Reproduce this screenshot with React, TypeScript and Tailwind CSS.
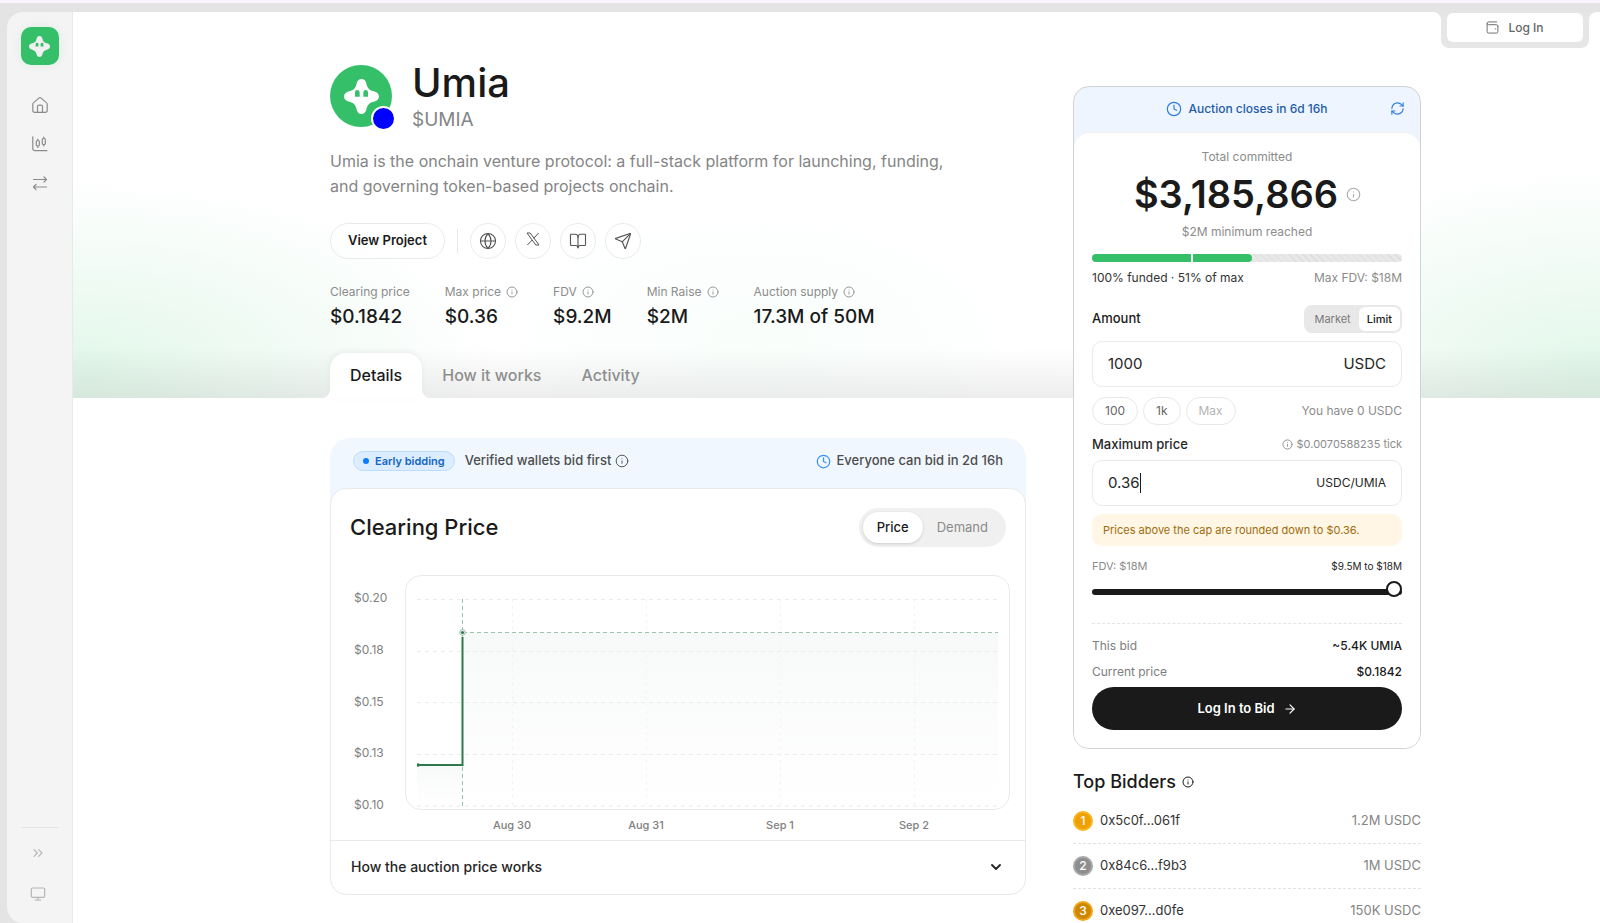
import React, { useState } from "react";
import {
  ArrowRight,
  BookOpen,
  ChevronDown,
  ChevronsRight,
  Clock,
  Globe,
  Info,
  Monitor,
  RefreshCw,
  Send,
} from "lucide-react";

function StarMark({ className, fill }: { className: string; fill: string }) {
  return (
    <svg viewBox="0 0 36 36" className={className} aria-hidden="true">
      <path
        fill={fill}
        d="M18 0c2.700 0 4.400 1.800 5 4.600.8 4.200 2.800 6.900 7.500 8C34 13.400 36 15.400 36 18s-2 4.600-5.500 5.400c-4.700 1.100-6.700 3.800-7.500 8-.6 2.800-2.300 4.600-5 4.600s-4.400-1.800-5-4.600c-.8-4.200-2.800-6.900-7.500-8C2 22.600 0 20.600 0 18s2-4.600 5.500-5.400c4.700-1.100 6.700-3.800 7.500-8C13.600 1.800 15.300 0 18 0z"
      />
      <path fill="#35bf69" d="M11.300 18.200v-4.400a2.400 2.400 0 0 1 4.800 0v4.400zM19.900 18.200v-4.400a2.400 2.400 0 0 1 4.800 0v4.400z" />
    </svg>
  );
}

function IconHome() {
  return (
    <svg viewBox="0 0 16 16" className="size-4" fill="none" stroke="currentColor" strokeWidth="1.200" strokeLinecap="round" strokeLinejoin="round" aria-hidden="true">
      <path d="M.8 7.200c0-.7.300-1.200.8-1.600l5.300-4.500a1.700 1.700 0 0 1 2.200 0l5.300 4.500c.5.4.8.9.8 1.600v6.300a1.800 1.800 0 0 1-1.800 1.800H2.600A1.800 1.800 0 0 1 .8 13.500z" />
      <path d="M5.500 15.300V9.600c0-.9.600-1.500 1.500-1.500h2c.9 0 1.500.6 1.500 1.500v5.700" />
    </svg>
  );
}

function IconCandles() {
  return (
    <svg viewBox="0 0 16 16" className="size-4" fill="none" stroke="currentColor" strokeWidth="1.200" strokeLinecap="round" strokeLinejoin="round" aria-hidden="true">
      <path d="M.8.8v11.900a2 2 0 0 0 2 2h12M5.800 3v1.500M5.800 10v1.500M11.800 1v1.500M11.800 8.500V10" />
      <rect x="4.300" y="4.500" width="3" height="5.500" rx="1" />
      <rect x="10.300" y="2.500" width="3" height="6" rx="1" />
    </svg>
  );
}

function IconSwap() {
  return (
    <svg viewBox="0 0 16 16" className="size-4" fill="none" stroke="currentColor" strokeWidth="1.200" strokeLinecap="round" strokeLinejoin="round" aria-hidden="true">
      <path d="M1.500 4.500h13M12 2l2.500 2.500L12 7M14.500 12h-13M4 9.500 1.500 12 4 14.500" />
    </svg>
  );
}

function IconX() {
  return (
    <svg viewBox="0 0 14 14" className="size-3.5" fill="none" stroke="currentColor" strokeWidth="1" aria-hidden="true">
      <path d="M1 1h3.200l8.800 12H9.800zM12.600 1 7.900 6.200M6.200 8 1.400 13" />
    </svg>
  );
}

function IconWallet() {
  return (
    <svg viewBox="0 0 14 14" className="size-[13px]" fill="none" stroke="currentColor" strokeLinecap="round" strokeLinejoin="round" aria-hidden="true">
      <path d="M12.800 5.500v6a1.500 1.500 0 0 1-1.500 1.500H2.700a1.500 1.500 0 0 1-1.500-1.500V2.800A1.800 1.800 0 0 1 3 1h8.500M1.200 2.800c0 .7.600 1.200 1.500 1.200h8.600a1.500 1.500 0 0 1 1.500 1.500M10 8.500h.4" />
    </svg>
  );
}

const STATS = [
  { label: "Clearing price", value: "$0.1842", info: false },
  { label: "Max price", value: "$0.36", info: true },
  { label: "FDV", value: "$9.2M", info: true },
  { label: "Min Raise", value: "$2M", info: true },
  { label: "Auction supply", value: "17.3M of 50M", info: true },
];

const BIDDERS = [
  { rank: 1, address: "0x5c0f...061f", amount: "1.2M USDC", badge: "bg-[#eea004] border-[#f6b81e]" },
  { rank: 2, address: "0x84c6...f9b3", amount: "1M USDC", badge: "bg-[#8e8e8e] border-[#a8a8a8]" },
  { rank: 3, address: "0xe097...d0fe", amount: "150K USDC", badge: "bg-[#d08700] border-[#eda51c]" },
];

function Sidebar() {
  return (
    <aside className="flex w-[66px] shrink-0 flex-col items-center rounded-l-2xl border-r border-[#e9e9e9] bg-[#f4f4f4] pt-[15px] pb-[21px]">
      <a href="#" aria-label="Umia home" className="flex size-[38px] items-center justify-center rounded-[10px] bg-[#35bf69] shadow-[0_0_10px_rgba(53,191,105,0.12)]">
        <StarMark className="size-[21px]" fill="#f0f0f0" />
      </a>
      <nav className="mt-8 flex flex-col gap-[23px] text-[#8c8c8c]">
        <a href="#" aria-label="Home"><IconHome /></a>
        <a href="#" aria-label="Markets"><IconCandles /></a>
        <a href="#" aria-label="Swap"><IconSwap /></a>
      </nav>
      <div className="mt-auto flex w-[38px] flex-col items-center gap-[25px] border-t border-[#e6e6e6] pt-[17px] pr-1 text-[#b5b5b5]">
        <button aria-label="Expand sidebar"><ChevronsRight className="size-4" strokeWidth={1.800} /></button>
        <button aria-label="Display"><Monitor className="size-4" strokeWidth={1.800} /></button>
      </div>
    </aside>
  );
}

function Hero() {
  const social = "flex size-9 items-center justify-center rounded-full border border-[#e9ebea] bg-white/40 text-[#555]";
  return (
    <section>
      <div className="flex gap-5">
        <div className="relative flex size-[62px] items-center justify-center rounded-full bg-[#35bf69]">
          <StarMark className="size-[35px]" fill="#fff" />
          <span className="absolute -right-1 -bottom-1 size-[25px] rounded-full border-2 border-white bg-[#0000ff]" />
        </div>
        <div className="-mt-[7px]">
          <h1 className="text-[40px] leading-[50px] font-medium text-[#1a1a1a]">Umia</h1>
          <p className="text-[19px] leading-6 text-[#858585]">$UMIA</p>
        </div>
      </div>
      <p className="mt-[17px] max-w-[660px] text-base leading-[25px] text-[#858585]">
        Umia is the onchain venture protocol: a full-stack platform for launching, funding,
        <br />
        and governing token-based projects onchain.
      </p>
      <div className="mt-6 flex items-center gap-[9px]">
        <button className="h-9 rounded-full border border-[#e9ebea] bg-white/40 px-[17px] text-[13px] font-semibold text-[#1a1a1a]">View Project</button>
        <span className="mx-[3px] h-6 w-px bg-[#e6e8e7]" />
        <a href="#" aria-label="Website" className={social}><Globe className="size-[18px]" strokeWidth={1.500} /></a>
        <a href="#" aria-label="X" className={`${social} pb-1`}><IconX /></a>
        <a href="#" aria-label="Docs" className={social}><BookOpen className="size-[18px]" strokeWidth={1.500} /></a>
        <a href="#" aria-label="Telegram" className={social}><Send className="size-[18px]" strokeWidth={1.500} /></a>
      </div>
      <dl className="mt-6 flex gap-[35px]">
        {STATS.map((s) => (
          <div key={s.label}>
            <dt className="flex items-center gap-[5px] text-xs leading-[18px] text-[#8c8c8c]">
              {s.label}
              {s.info && <Info className="size-3" strokeWidth={1.800} />}
            </dt>
            <dd className="mt-[2px] text-[19px] leading-7 font-medium text-[#1a1a1a]">{s.value}</dd>
          </div>
        ))}
      </dl>
      <div role="tablist" className="mt-[22px] flex h-[46px] text-base font-medium text-[#8f8f8f]">
        <button role="tab" aria-selected="true" className="relative rounded-t-2xl bg-white px-5 pb-[3px] text-[#1a1a1a] shadow-[0_-2px_6px_rgba(0,0,0,0.05)]">
          Details
          <svg viewBox="0 0 10 10" className="absolute bottom-0 -left-[10px] size-[10px]" aria-hidden="true"><path d="M10 0v10H0A10 10 0 0 0 10 0z" fill="#fff" /></svg>
          <svg viewBox="0 0 10 10" className="absolute -right-[10px] bottom-0 size-[10px]" aria-hidden="true"><path d="M0 0v10h10A10 10 0 0 1 0 0z" fill="#fff" /></svg>
        </button>
        <button role="tab" aria-selected="false" className="px-5 pb-[3px]">How it works</button>
        <button role="tab" aria-selected="false" className="px-5 pb-[3px]">Activity</button>
      </div>
    </section>
  );
}

const Y_TICKS = ["$0.20", "$0.18", "$0.15", "$0.13", "$0.10"];
const X_TICKS = [
  { label: "Aug 30", x: 95 },
  { label: "Aug 31", x: 229 },
  { label: "Sep 1", x: 363 },
  { label: "Sep 2", x: 497 },
];

function PriceChart() {
  return (
    <div className="mt-7 mr-[15px] ml-[19px] flex">
      <div className="flex h-[240px] w-[55px] shrink-0 flex-col justify-between pt-[13px] pl-1 text-xs leading-5 text-[#808080]">
        {Y_TICKS.map((t) => (
          <span key={t}>{t}</span>
        ))}
      </div>
      <div className="min-w-0 grow">
        <div className="rounded-2xl border border-[#eaeaea] px-[11px] pt-[23px] pb-[2px]">
          <svg viewBox="0 0 581 208" preserveAspectRatio="none" className="block h-[208px] w-full" fill="none" role="img" aria-label="Clearing price over time">
            <defs>
              <linearGradient id="area" x1="0" y1="0" x2="0" y2="1">
                <stop offset="0" stopColor="#1f5a3c" stopOpacity="0.035" />
                <stop offset="1" stopColor="#1f5a3c" stopOpacity="0" />
              </linearGradient>
            </defs>
            <path d="M46 33h535v174H46z" fill="url(#area)" />
            <path d="M0 166h46v41H0z" fill="url(#area)" />
            <path d="M0 .5h581M0 52.500h581M0 103.500h581M0 155.500h581M0 207h581" stroke="#ebebeb" strokeDasharray="4 4" />
            <path d="M95.500 0v208M229.500 0v208M363.500 0v208M497.500 0v208" stroke="#f3f3f3" strokeDasharray="3 4" />
            <path d="M45.500 0v208M46 33.500h535" stroke="#9cc4ad" strokeDasharray="4 3" />
            <path d="M0 166h45.500V38" stroke="#2c7a4b" strokeWidth="2" />
            <circle cx="45.500" cy="33.500" r="2.800" fill="#fff" stroke="#8fb9a1" />
            <circle cx="45.500" cy="33.500" r="1.600" fill="#2c7a4b" />
            <circle cx="1" cy="166" r="1.800" fill="#2c7a4b" />
          </svg>
        </div>
        <div className="relative h-[30px] text-[11px] leading-[30px] font-medium text-[#808080]">
          {X_TICKS.map((t) => (
            <span key={t.label} className="absolute -translate-x-1/2" style={{ left: `${((t.x + 12) / 605) * 100}%` }}>{t.label}</span>
          ))}
        </div>
      </div>
    </div>
  );
}

function ClearingPrice() {
  return (
    <section className="mt-[39px] rounded-t-[20px] rounded-b-2xl bg-[#f0f7ff]">
      <div className="flex h-[50px] items-center px-[23px] pb-1 text-[13px] font-medium text-[#4d4d4d]">
        <span className="flex h-5 items-center gap-[6px] rounded-full border border-[#bcdcff] bg-[#dcedff] px-[9px] text-[11px] font-semibold text-[#1565c0]">
          <span className="size-[6px] rounded-full bg-[#0a7cff]" />
          Early bidding
        </span>
        <span className="ml-[10px]">Verified wallets bid first</span>
        <Info className="ml-1 size-3.5" strokeWidth={1.600} />
        <Clock className="ml-auto size-[15px] text-[#3b93ff]" />
        <span className="ml-[5px]">Everyone can bid in 2d 16h</span>
      </div>
      <div className="rounded-2xl border border-[#eaeaea] bg-white">
        <div className="flex items-center justify-between px-[19px] pt-[19px]">
          <h2 className="pb-[2px] text-[22px] leading-8 font-medium text-[#1a1a1a]">Clearing Price</h2>
          <div className="flex rounded-full bg-[#f0f0f0] p-1 text-[13px]">
            <button className="h-[31px] rounded-full bg-white px-[14px] font-medium text-[#1a1a1a] shadow-[0_1px_3px_rgba(0,0,0,0.15)]">Price</button>
            <button className="h-[31px] px-[14px] text-[#8a8a8a]">Demand</button>
          </div>
        </div>
        <PriceChart />
        <button className="flex h-[54px] w-full items-center justify-between border-t border-[#eaeaea] pr-[21px] pb-px pl-5 text-sm font-medium text-[#262626]">
          How the auction price works
          <ChevronDown className="size-4" strokeWidth={2.800} />
        </button>
      </div>
    </section>
  );
}

function BidCard() {
  const [amount, setAmount] = useState("1000");
  const [price, setPrice] = useState("0.36");
  const row = "flex items-center justify-between";
  const chip = "h-7 rounded-full border border-[#e8e8e8] px-3 text-xs";
  return (
    <section className="overflow-hidden rounded-2xl border border-[#d2d2d2] bg-[#eef5fe]">
      <div className="relative flex h-[45px] items-center justify-center gap-[6px] pb-[2px] text-xs font-medium text-[#1f5ca8]">
        <Clock className="size-4 text-[#2f7de1]" strokeWidth={1.800} />
        Auction closes in 6d 16h
        <button aria-label="Refresh" className="absolute right-[15px] text-[#2f7de1]"><RefreshCw className="size-[15px]" strokeWidth={1.800} /></button>
      </div>
      <div className="rounded-t-2xl border-t border-[#f0f0f0] bg-white px-[18px] pt-[14px] pb-[18px] text-[#1a1a1a]">
        <p className="text-center text-xs leading-5 text-[#8c8c8c]">Total committed</p>
        <div className="flex h-[55px] items-center justify-center gap-2 pl-[1px]">
          <span className="text-[38px] font-semibold">$3,185,866</span>
          <Info className="size-[15px] text-[#aaa]" strokeWidth={1.800} />
        </div>
        <p className="text-center text-xs leading-5 text-[#8c8c8c]">$2M minimum reached</p>
        <div className="mt-3 flex h-2 overflow-hidden rounded-full bg-[repeating-linear-gradient(45deg,#e8e8e8_0_4px,#dcdcdc_4px_5px)]">
          <div className="w-[32%] bg-[#35bf69]" />
          <div className="w-[2px] bg-white" />
          <div className="w-[19%] rounded-r-full bg-[#35bf69]" />
        </div>
        <div className={`${row} mt-[6px] text-xs leading-5`}>
          <span className="text-[#333]">100% funded · 51% of max</span>
          <span className="text-[#8c8c8c]">Max FDV: $18M</span>
        </div>
        <div className={`${row} mt-[17px]`}>
          <label htmlFor="amount" className="text-[13px] font-medium">Amount</label>
          <div className="flex rounded-lg bg-[#e8e8e8] p-[2px] text-[11px]">
            <button className="h-6 px-2 text-[#7a7a7a]">Market</button>
            <button className="h-6 rounded-md bg-white px-2 font-medium">Limit</button>
          </div>
        </div>
        <div className="mt-2 flex h-[46px] items-center rounded-[10px] border border-[#eaeaea] px-[15px] text-[15px] text-[#262626]">
          <input id="amount" value={amount} onChange={(e) => setAmount(e.target.value)} className="w-0 grow outline-none" />
          <span>USDC</span>
        </div>
        <div className="mt-[10px] flex items-center gap-[5px] text-[#666]">
          <button className={chip} onClick={() => setAmount("100")}>100</button>
          <button className={chip} onClick={() => setAmount("1000")}>1k</button>
          <button className={`${chip} text-[#b5b5b5]`} disabled>Max</button>
          <span className="ml-auto text-xs text-[#8c8c8c]">You have 0 USDC</span>
        </div>
        <div className={`${row} mt-[9px] leading-5`}>
          <label htmlFor="price" className="text-[13px] font-medium text-[#262626]">Maximum price</label>
          <span className="flex items-center gap-1 text-[11px] text-[#8c8c8c]">
            <Info className="size-[11px]" />
            $0.0070588235 tick
          </span>
        </div>
        <div className="mt-[6px] flex h-[46px] items-center rounded-[10px] border border-[#eaeaea] px-[15px] text-[#262626]">
          <input id="price" value={price} onChange={(e) => setPrice(e.target.value)} className="field-sizing-content text-[15px] caret-transparent outline-none" />
          <span className="h-5 w-px bg-[#1a1a1a]" aria-hidden="true" />
          <span className="ml-auto text-xs">USDC/UMIA</span>
        </div>
        <p className="mt-2 rounded-[10px] bg-[#fff6e5] px-[11px] py-2 text-[11px] leading-4 text-[#a06c0c]">
          Prices above the cap are rounded down to $0.36.
        </p>
        <div className={`${row} mt-[10px] text-[11px] leading-5`}>
          <label htmlFor="fdv" className="text-[#8c8c8c]">FDV: $18M</label>
          <span className="text-[10px] text-[#262626]">$9.5M to $18M</span>
        </div>
        <input
          id="fdv"
          type="range"
          defaultValue={100}
          className="mt-2 block h-4 w-full appearance-none bg-transparent [&::-webkit-slider-runnable-track]:h-[6px] [&::-webkit-slider-runnable-track]:rounded-full [&::-webkit-slider-runnable-track]:bg-[#1a1a1a] [&::-webkit-slider-thumb]:-mt-[8px] [&::-webkit-slider-thumb]:size-4 [&::-webkit-slider-thumb]:appearance-none [&::-webkit-slider-thumb]:rounded-full [&::-webkit-slider-thumb]:border-2 [&::-webkit-slider-thumb]:border-[#1a1a1a] [&::-webkit-slider-thumb]:bg-white"
        />
        <div className="mt-[23px] border-t border-dashed border-[#e4e4e4] pt-[9px] text-xs">
          <div className={`${row} h-[26px]`}>
            <span className="text-[#7d7d7d]">This bid</span>
            <span className="font-medium">~5.4K UMIA</span>
          </div>
          <div className={`${row} h-[26px]`}>
            <span className="text-[#7d7d7d]">Current price</span>
            <span className="font-medium">$0.1842</span>
          </div>
        </div>
        <button className="mt-[2px] flex h-[43px] w-full items-center justify-center gap-2 rounded-full bg-[#1a1a1a] text-[13px] font-semibold text-white">
          Log In to Bid
          <ArrowRight className="size-3.5" />
        </button>
      </div>
    </section>
  );
}

function TopBidders() {
  return (
    <section className="mt-[19px]">
      <h2 className="flex items-center gap-[6px] text-[18px] leading-7 font-medium text-[#1a1a1a]">
        Top Bidders
        <Info className="size-3" />
      </h2>
      <ol className="mt-[3px]">
        {BIDDERS.map((b) => (
          <li key={b.rank} className="flex h-[45px] items-center border-b border-dashed border-[#e2e2e2] text-[13px]">
            <span className={`flex size-5 items-center justify-center rounded-full border-2 text-xs font-medium text-white ${b.badge}`}>{b.rank}</span>
            <span className="ml-[7px] text-[#333]">{b.address}</span>
            <span className="ml-auto text-[#858585]">{b.amount}</span>
          </li>
        ))}
      </ol>
    </section>
  );
}

export default function App() {
  return (
    <div className="flex h-screen flex-col overflow-hidden border-t-[3px] border-[#fbf3ff] bg-[#e4e4e4] pt-[9px] pl-[7px] font-['Inter','Liberation_Sans',sans-serif] text-[#1a1a1a]">
      <div className="flex min-h-0 grow">
        <Sidebar />
        <main className="relative min-w-0 grow overflow-hidden bg-white">
          <div className="absolute inset-x-0 top-0 h-[386px] bg-[radial-gradient(420px_190px_at_0%_92%,#e2f7ea,#f1fbf5_50%,rgba(255,255,255,0)),radial-gradient(400px_200px_at_100%_92%,#e2f7ea,#f1fbf5_50%,rgba(255,255,255,0)),radial-gradient(300px_150px_at_45%_85%,#f9fefb,rgba(255,255,255,0))]" />
          <div className="absolute inset-x-0 top-[336px] h-[50px] bg-gradient-to-b from-transparent to-black/7" />
          <div className="absolute top-0 right-[11px] rounded-b-lg bg-[#e6e6e6] px-[6px] pt-[1px] pb-[6px]">
            <svg viewBox="0 0 8 8" className="absolute top-0 -left-2 size-2" aria-hidden="true"><path d="M0 0h8v8a8 8 0 0 0-8-8z" fill="#e6e6e6" /></svg>
            <svg viewBox="0 0 8 8" className="absolute top-0 -right-2 size-2" aria-hidden="true"><path d="M8 0H0v8a8 8 0 0 1 8-8z" fill="#e6e6e6" /></svg>
            <button className="flex h-[29px] w-[136px] items-center justify-center gap-[9px] rounded-md bg-white text-xs font-medium text-[#666]">
              <IconWallet />
              Log In
            </button>
          </div>
          <div className="relative flex gap-[47px] pr-[179px] pl-[257px]">
            <div className="min-w-0 grow pt-[53px]">
              <Hero />
              <ClearingPrice />
            </div>
            <div className="w-[348px] shrink-0 pt-[74px]">
              <BidCard />
              <TopBidders />
            </div>
          </div>
        </main>
      </div>
    </div>
  );
}
